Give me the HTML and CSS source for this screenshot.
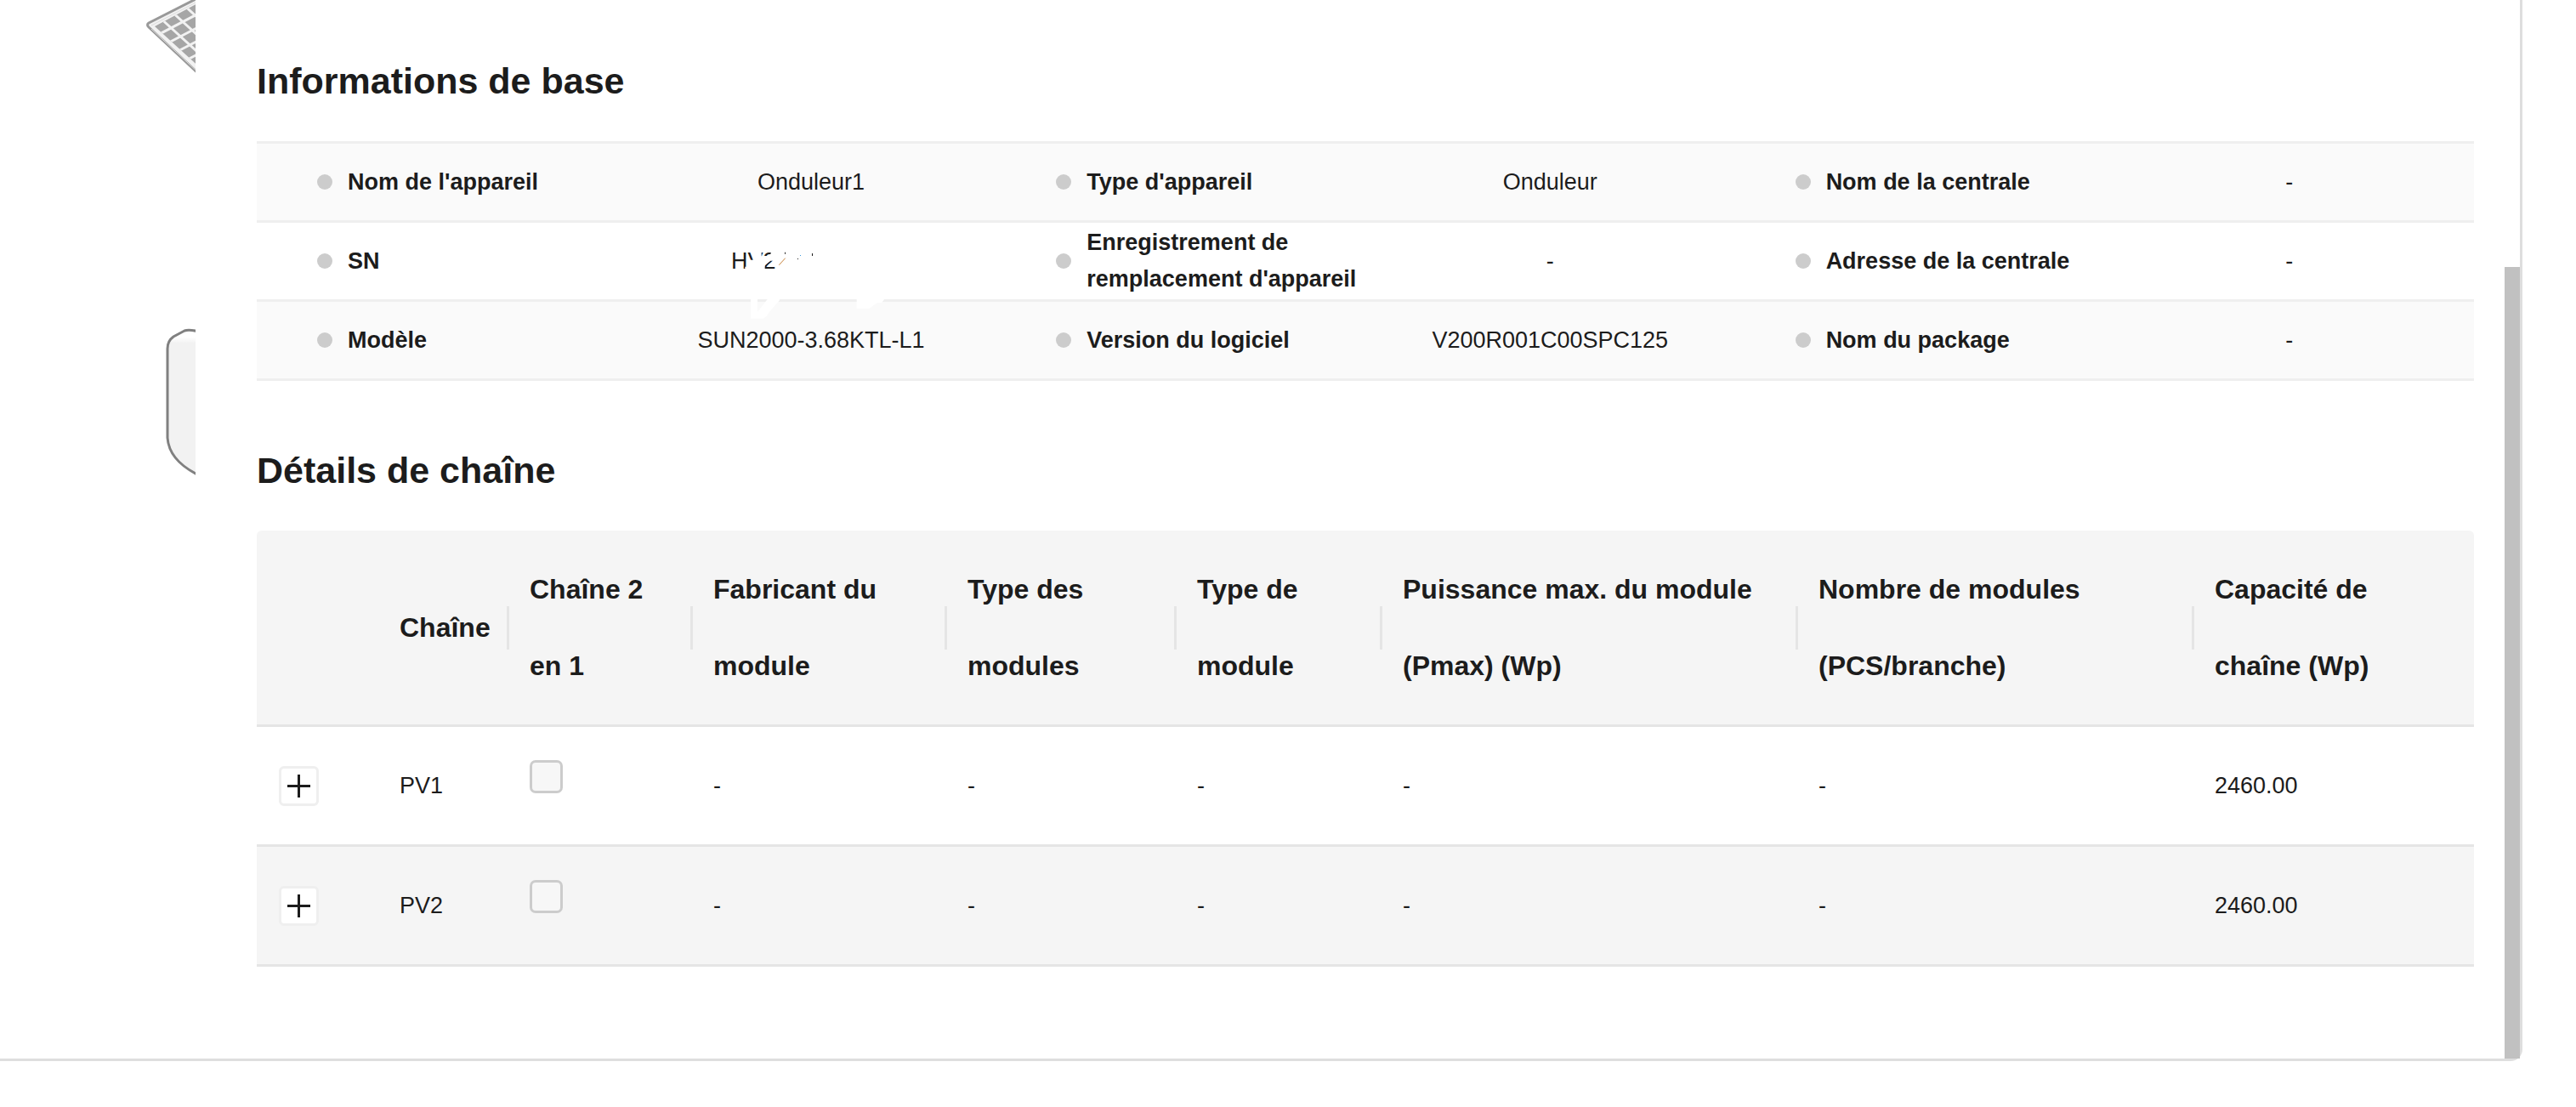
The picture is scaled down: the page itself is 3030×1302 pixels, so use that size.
FILE: index.html
```html
<!DOCTYPE html>
<html lang="fr">
<head>
  <meta charset="utf-8">
  <title>Onduleur1</title>
  <link rel="stylesheet" href="styles.css">
</head>
<body>
  <main class="panel">
    <aside class="scene" aria-hidden="true">
      <svg class="scene-art" viewBox="0 0 230 600">
        <defs>
          <clipPath id="grid"><path d="M182 31L240 0V84Z"/></clipPath>
          <linearGradient id="shine" x1="0" y1="0" x2="0" y2="1">
            <stop offset="0" stop-color="#fff"/>
            <stop offset=".05" stop-color="#fff"/>
            <stop offset=".09" stop-color="#f2f2f2"/>
          </linearGradient>
        </defs>
        <!-- solar module -->
        <path d="M236 -4L175 27Q172 29 175 32L236 89" fill="#f2f2f2" stroke="#999" stroke-width="3"/>
        <path d="M178 30L236 0" fill="none" stroke="#ddd"/>
        <path d="M182 31L240 0V84Z" fill="#a6a6a6"/>
        <g clip-path="url(#grid)" stroke="#f2f2f2" stroke-width="3">
          <path d="M180 44L264 0M191 54L275 10M202 64L286 20M213 74L297 30M185 18L262 88M199 11L276 81M213 3L290 73"/>
        </g>
        <path d="M178 34L234 86" fill="none" stroke="#ddd"/>
        <!-- inverter housing -->
        <path d="M234 390Q222 387 217 389L204 396Q197 401 197 410V515Q199 542 234 559" fill="url(#shine)" stroke="#808080" stroke-width="3"/>
      </svg>
    </aside>

    <div class="content">
      <h2 class="title">Informations de base</h2>
      <table class="info">
        <tbody>
          <tr>
            <th scope="row"><div class="label">Nom de l'appareil</div></th><td>Onduleur1</td>
            <th scope="row"><div class="label">Type d'appareil</div></th><td>Onduleur</td>
            <th scope="row"><div class="label">Nom de la centrale</div></th><td>-</td>
          </tr>
          <tr>
            <th scope="row"><div class="label">SN</div></th>
            <td>
              <span class="serial">HV2
                <svg class="eraser" viewBox="87 48 600 300" aria-hidden="true">
                  <g fill="#fff">
                    <path d="M163 70H194V94H206V142H136V131H146V107H167Z"/>
                    <path d="M202 93H218L226 86L232 70H250V128H234L230 116L236 110H226L206 126Z"/>
                    <path d="M156 240H180V290L215 246V240H262L256 252L226 286L212 306L200 314H156Z"/>
                    <path d="M530 240H632L618 258H602L575 278H530Z"/>
                  </g>
                  <path d="M256 125L278 101" stroke="#c8833c" stroke-width="3"/>
                  <path d="M276 80h3v6h-3zM321 102h3v3h-3zM372 84h3v9h-3z" fill="#1c1c1c"/>
                  <path d="M330 90h3v3h-3z" fill="#3a9be0"/>
                </svg>
              </span>
            </td>
            <th scope="row"><div class="label">Enregistrement de remplacement d'appareil</div></th><td>-</td>
            <th scope="row"><div class="label">Adresse de la centrale</div></th><td>-</td>
          </tr>
          <tr>
            <th scope="row"><div class="label">Modèle</div></th><td>SUN2000-3.68KTL-L1</td>
            <th scope="row"><div class="label">Version du logiciel</div></th><td>V200R001C00SPC125</td>
            <th scope="row"><div class="label">Nom du package</div></th><td>-</td>
          </tr>
        </tbody>
      </table>

      <h2 class="title">Détails de chaîne</h2>
      <table class="strings">
        <colgroup>
          <col class="c-expand"><col class="c-name"><col class="c-pair"><col class="c-maker"><col class="c-types">
          <col class="c-type"><col class="c-power"><col class="c-count"><col class="c-capacity">
        </colgroup>
        <thead>
          <tr>
            <td class="corner"></td>
            <th scope="col">Chaîne</th>
            <th scope="col">Chaîne 2<br>en 1</th>
            <th scope="col">Fabricant du<br>module</th>
            <th scope="col">Type des<br>modules</th>
            <th scope="col">Type de<br>module</th>
            <th scope="col">Puissance max. du module<br>(Pmax) (Wp)</th>
            <th scope="col">Nombre de modules<br>(PCS/branche)</th>
            <th scope="col">Capacité de<br>chaîne (Wp)</th>
          </tr>
        </thead>
        <tbody>
          <tr>
            <td><button class="expand" type="button" aria-label="Développer PV1"><svg viewBox="0 0 27 27"><path d="M13.5 0V27M0 13.5H27"/></svg></button></td>
            <td>PV1</td>
            <td><input class="check" type="checkbox" aria-label="PV1 : chaîne 2 en 1"></td>
            <td>-</td><td>-</td><td>-</td><td>-</td><td>-</td>
            <td>2460.00</td>
          </tr>
          <tr>
            <td><button class="expand" type="button" aria-label="Développer PV2"><svg viewBox="0 0 27 27"><path d="M13.5 0V27M0 13.5H27"/></svg></button></td>
            <td>PV2</td>
            <td><input class="check" type="checkbox" aria-label="PV2 : chaîne 2 en 1"></td>
            <td>-</td><td>-</td><td>-</td><td>-</td><td>-</td>
            <td>2460.00</td>
          </tr>
        </tbody>
      </table>
    </div>

    <div class="scrollbar" aria-hidden="true"><div class="thumb"></div></div>
  </main>
</body>
</html>
```
FILE: styles.css
```css
* {
  box-sizing: border-box;
}

body {
  margin: 0;
  background: #fff;
  color: #1c1c1c;
  font: 27px/43px "Liberation Sans", Arial, sans-serif;
}

.panel {
  display: flex;
  margin-right: 63px;
  border: solid #dedede;
  border-width: 0 3px 3px 0;
  border-bottom-right-radius: 14px;
}

.scene {
  flex: 0 0 230px;
}

.scene-art {
  display: block;
  width: 100%;
}

.content {
  flex: 1;
  min-width: 0;
  padding: 65px 36px 108px 72px;
}

.title {
  margin: 0 0 41px;
  font-size: 43px;
  line-height: 60px;
}

table {
  width: 100%;
  table-layout: fixed;
  border-spacing: 0;
}

th,
td {
  padding: 0;
  text-align: left;
}

/* Basic information */
.info {
  margin-bottom: 75px;
  border-top: 3px solid #efefef;
}

.info th,
.info td {
  height: 93px;
  border-bottom: 3px solid #efefef;
}

.info tr:nth-child(odd) {
  background: #fafafa;
}

.info th {
  padding-left: 71px;
}

.info td {
  text-align: center;
}

.label {
  display: flex;
  align-items: center;
  gap: 18px;
}

.label::before {
  content: "";
  flex: 0 0 18px;
  height: 18px;
  border-radius: 50%;
  background: #ccc;
}

.serial {
  display: inline-block;
  position: relative;
  width: 188px;
  text-align: left;
}

.eraser {
  position: absolute;
  top: 0;
  left: 0;
  width: 200px;
  height: 100px;
}

/* String details */
.strings th,
.strings td {
  height: 141px;
  padding: 0 24px;
  border-bottom: 3px solid #e5e5e5;
}

.strings thead th,
.strings .corner {
  height: 231px;
  background: #f5f5f5;
}

.strings thead th {
  padding-right: 3px;
  font-size: 32px;
  line-height: 90px;
}

.strings thead th:not(:last-child) {
  background: linear-gradient(#e5e5e5, #e5e5e5) right center / 3px 51px no-repeat #f5f5f5;
}

.strings .corner {
  border-top-left-radius: 6px;
}

.strings thead th:last-child {
  border-top-right-radius: 6px;
}

.strings tbody tr:nth-child(even) {
  background: #f5f5f5;
}

.c-expand { width: 144px; }
.c-name { width: 153px; }
.c-pair { width: 216px; }
.c-maker { width: 299px; }
.c-types { width: 270px; }
.c-type { width: 242px; }
.c-power { width: 489px; }
.c-count { width: 466px; }
.c-capacity { width: 329px; }

.expand {
  display: grid;
  place-items: center;
  width: 47px;
  height: 47px;
  margin-left: 2px;
  padding: 0;
  border: 3px solid #efefef;
  border-radius: 6px;
  background: #fff;
}

.expand svg {
  width: 27px;
  height: 27px;
  fill: none;
  stroke: #1c1c1c;
  stroke-width: 3;
}

.check {
  appearance: none;
  display: block;
  width: 39px;
  height: 39px;
  margin: 0 0 22px;
  border: 3px solid #ccc;
  border-radius: 7px;
  background: #f7f7f7;
}

.scrollbar {
  flex: 0 0 18px;
  display: flex;
  padding-top: 314px;
}

.thumb {
  flex: 1;
  background: #c1c1c1;
}
```
